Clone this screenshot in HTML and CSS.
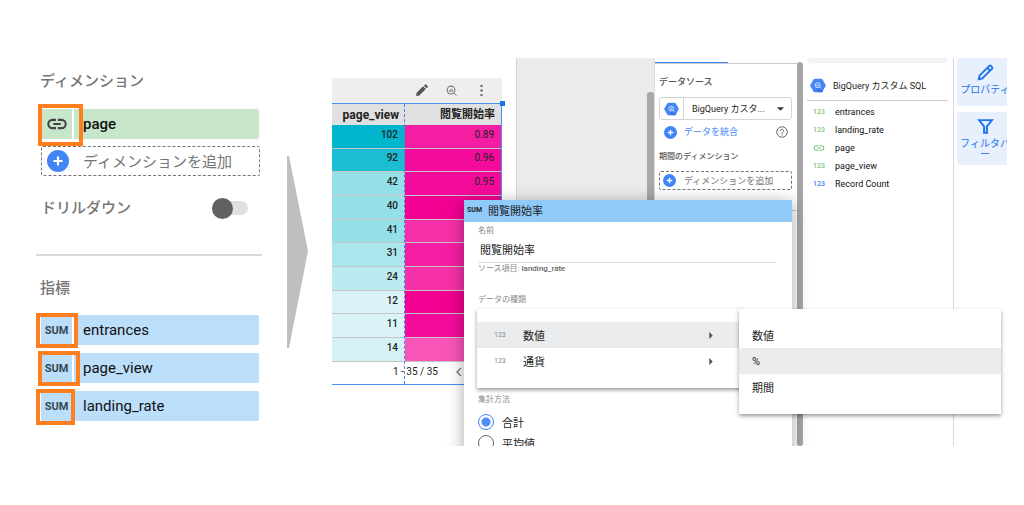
FILE: index.html
```html
<!DOCTYPE html>
<html lang="ja">
<head>
<meta charset="utf-8">
<title>閲覧開始率</title>
<link rel="stylesheet" href="styles.css">
</head>
<body>
<svg class="defs" aria-hidden="true">
  <symbol id="plus" viewBox="0 0 24 24"><circle cx="12" cy="12" r="12" fill="#4285f4"/><path d="M12 7v10M7 12h10" stroke="#fff" stroke-width="2.4"/></symbol>
  <symbol id="link" viewBox="0 0 24 24"><path d="M11 7.500H7a4.500 4.500 0 0 0 0 9h4M13 7.500h4a4.500 4.500 0 0 1 0 9h-4M8 12h8" fill="none" stroke="currentColor" stroke-width="2.2"/></symbol>
  <symbol id="hex" viewBox="0 0 24 22"><path d="M7 1h10q1 0 1.500 .8l5 8.400q.5.800 0 1.600l-5 8.400q-.5.800-1.500.800H7q-1 0-1.500-.8l-5-8.400q-.5-.8 0-1.600l5-8.400Q6 1 7 1z" fill="#4285f4"/><path d="M14 14l6 5-1.500 2H12l-3-6z" fill="#3b78e7"/><circle cx="11.500" cy="10.500" r="3.800" fill="none" stroke="#d6e4ff" stroke-width="1.500"/><path d="M14.300 13.300l2.200 2.200M10.300 10v2M12.300 9v3" stroke="#d6e4ff" stroke-width="1.500"/></symbol>
</svg>
<main class="page">
  <section class="setup">
    <h2 class="heading">ディメンション</h2>
    <div class="chip chip-green">
      <span class="chip-type"><svg class="link-icon"><use href="#link"/></svg></span>
      <span class="chip-name">page</span>
      <span class="mark mark-page"></span>
    </div>
    <button class="add"><svg class="plus-icon"><use href="#plus"/></svg>ディメンションを追加</button>
    <label class="drill"><span>ドリルダウン</span><input type="checkbox" class="toggle"></label>
    <hr class="rule">
    <h2 class="heading">指標</h2>
    <ul class="metrics">
      <li class="chip chip-blue"><span class="chip-type">SUM</span><span class="chip-name">entrances</span><span class="mark mark-left"></span></li>
      <li class="chip chip-blue"><span class="chip-type">SUM</span><span class="chip-name">page_view</span><span class="mark mark-mid"></span></li>
      <li class="chip chip-blue"><span class="chip-type">SUM</span><span class="chip-name">landing_rate</span><span class="mark mark-narrow"></span></li>
    </ul>
  </section>

  <svg class="arrow" viewBox="0 0 21 192" aria-hidden="true"><path d="M0 0h2l19 95-19 97H0z" fill="#bfbfbf"/></svg>

  <section class="studio">
    <div class="report">
      <div class="tools">
        <svg class="tool" viewBox="0 0 24 24"><path d="M2 22l1-6L15 4l5 5L8 21zM16.500 3l2-2q1-1 2 0l3 3q1 1 0 2l-2 2z" fill="#555"/></svg>
        <svg class="tool tool-small" viewBox="0 0 24 24"><circle cx="11" cy="11" r="8.500" fill="none" stroke="#777" stroke-width="2.400"/><path d="M17 17l6 6M8 11v4M11 8v7M14 10v5" stroke="#777" stroke-width="2"/></svg>
        <svg class="tool" viewBox="0 0 24 24"><g fill="#666"><circle cx="12" cy="3.500" r="2.200"/><circle cx="12" cy="12" r="2.200"/><circle cx="12" cy="20.500" r="2.200"/></g></svg>
      </div>
      <div class="chart">
        <table class="grid">
          <thead><tr><th class="col-page">page_view</th><th>閲覧開始率</th></tr></thead>
          <tbody>
            <tr><td class="c1">102</td><td class="p3">0.89</td></tr>
            <tr><td class="c2">92</td><td class="p2">0.96</td></tr>
            <tr><td class="c3">42</td><td class="p2">0.95</td></tr>
            <tr><td class="c3">40</td><td class="p1"></td></tr>
            <tr><td class="c3">41</td><td class="p4"></td></tr>
            <tr><td class="c4">31</td><td class="p3"></td></tr>
            <tr><td class="c5">24</td><td class="p4"></td></tr>
            <tr><td class="c7">12</td><td class="p1"></td></tr>
            <tr><td class="c7">11</td><td class="p2"></td></tr>
            <tr><td class="c6">14</td><td class="p5"></td></tr>
          </tbody>
        </table>
        <div class="pager"><span>1 - 35 / 35</span><svg class="prev" viewBox="0 0 6 10"><path d="M5 1L1 5l4 4" fill="none" stroke="#777" stroke-width="1.300"/></svg></div>
        <span class="column-line"></span>
        <span class="handle"></span>
      </div>
    </div>
    <div class="canvas"><span class="canvas-thumb"></span></div>

    <div class="data">
      <div class="tab-line"><span class="tab-active"></span></div>
      <label class="data-title" for="source">データソース</label>
      <div class="source">
        <span class="source-icon"><svg class="hex"><use href="#hex"/></svg></span>
        <select id="source" class="source-select"><option>BigQuery カスタ...</option></select>
        <svg class="caret" viewBox="0 0 8 4"><path d="M0 0h8L4 4z" fill="#333"/></svg>
      </div>
      <div class="blend">
        <button class="blend-button"><svg class="plus-small"><use href="#plus"/></svg>データを統合</button>
        <svg class="help" viewBox="0 0 24 24"><circle cx="12" cy="12" r="10.500" fill="none" stroke="#666" stroke-width="2"/><path d="M8.500 10a3.500 3.500 0 1 1 5.500 2.700c-1.200.9-2 1.300-2 2.800M12 17v2.200" fill="none" stroke="#666" stroke-width="2"/></svg>
      </div>
      <h3 class="range-title">期間のディメンション</h3>
      <button class="add add-small"><svg class="plus-small"><use href="#plus"/></svg>ディメンションを追加</button>
      <hr class="data-rule">
    </div>
    <div class="scroll"></div>

    <div class="fields">
      <div class="search"></div>
      <div class="fields-title"><svg class="hex"><use href="#hex"/></svg>BigQuery カスタム SQL</div>
      <ul class="field-list">
        <li><span class="kind">123</span>entrances</li>
        <li><span class="kind">123</span>landing_rate</li>
        <li><span class="kind"><svg class="kind-link"><use href="#link"/></svg></span>page</li>
        <li><span class="kind">123</span>page_view</li>
        <li><span class="kind kind-blue">123</span>Record Count</li>
      </ul>
    </div>
    <nav class="rail">
      <button class="rail-button rail-first"><svg class="rail-icon" viewBox="0 0 24 24"><path d="M2.500 21.500l1-5L17 3q1.500-1.500 3 0l1 1q1.500 1.500 0 3L7.500 20.500zM14.500 5.500l4 4" fill="none" stroke="#1a73e8" stroke-width="2.600"/></svg>プロパティ</button>
      <button class="rail-button"><svg class="rail-icon" viewBox="0 0 24 24"><path d="M3 3h18l-7 9v9h-4v-9z" fill="none" stroke="#1a73e8" stroke-width="2.800"/></svg>フィルタバー</button>
    </nav>

    <form class="dialog">
      <header class="dialog-head"><span class="sum">SUM</span>閲覧開始率</header>
      <div class="dialog-body">
        <label class="small" for="name">名前</label>
        <input id="name" class="name" type="text" value="閲覧開始率">
        <p class="small origin">ソース項目: <b>landing_rate</b></p>
        <p class="small type-title">データの種類</p>
        <fieldset class="method">
          <legend class="small">集計方法</legend>
          <label class="choice"><input type="radio" name="method" class="radio" checked>合計</label>
          <label class="choice"><input type="radio" name="method" class="radio">平均値</label>
        </fieldset>
      </div>
    </form>
    <div class="menu menu-type">
      <button class="item item-on"><span class="item-kind">123</span>数値<svg class="more" viewBox="0 0 4 8"><path d="M0 0l4 4-4 4z" fill="#555"/></svg></button>
      <button class="item"><span class="item-kind">123</span>通貨<svg class="more" viewBox="0 0 4 8"><path d="M0 0l4 4-4 4z" fill="#555"/></svg></button>
    </div>
    <div class="menu menu-format">
      <button class="item">数値</button>
      <button class="item item-on">%</button>
      <button class="item">期間</button>
    </div>
  </section>
</main>
</body>
</html>
```

FILE: styles.css
```css
* { box-sizing: border-box; }

body {
  margin: 0;
  background: #fff;
  color: #222;
  font-family: Roboto, "Noto Sans CJK JP", sans-serif;
  font-size: 9px;
}

h2, h3, p, ul, fieldset { margin: 0; padding: 0; border: 0; }
ul { list-style: none; }
button, input, select { margin: 0; font: inherit; color: inherit; }
button { padding: 0; border: 0; background: none; text-align: left; cursor: pointer; }
svg { flex: none; }

.defs { position: absolute; width: 0; height: 0; }

.page {
  display: flex;
  align-items: flex-start;
  padding: 58px 17px 58px 36px;
}

/* Dimension and metric setup */
.setup { width: 226px; padding-top: 11px; }
.heading {
  padding-left: 4px;
  font-size: 15px;
  line-height: 24px;
  font-weight: 500;
  color: #757575;
}
.chip {
  position: relative;
  display: flex;
  align-items: center;
  height: 30px;
  margin: 0 3px 0 5px;
  border-radius: 2px;
  font-size: 15px;
}
.chip-green { margin-top: 16px; background: #c8e6c9; }
.chip-blue { background: #bbdefb; }
.chip-type {
  display: flex;
  align-items: center;
  justify-content: center;
  width: 33px;
  height: 100%;
  border-right: 2px solid #fff;
  font-size: 11px;
  font-weight: 700;
  color: #37474f;
}
.chip-name { padding-left: 9px; font-weight: 500; color: #111; }
.chip-blue .chip-name { font-weight: 400; }
.link-icon { width: 22px; height: 22px; color: #444; }
.mark { position: absolute; border: 4px solid #ff7f1f; }
.mark-page { left: -3px; top: -5px; width: 45px; height: 42px; }
.mark-left { left: -5px; top: -2px; width: 42px; height: 35px; }
.mark-mid { left: -3px; top: -2px; width: 42px; height: 35px; }
.mark-narrow { left: -5px; top: -2px; width: 39px; height: 36px; }
.add {
  display: flex;
  align-items: center;
  gap: 14px;
  width: 219px;
  height: 30px;
  margin: 7px 0 0 5px;
  padding: 0 0 1px 5px;
  border: 1px dashed #757575;
  border-radius: 2px;
  font-size: 15px;
  color: #757575;
}
.plus-icon { width: 22px; height: 22px; }
.drill {
  display: flex;
  align-items: center;
  justify-content: space-between;
  margin-top: 20px;
  padding: 0 14px 0 5px;
  font-size: 15px;
  line-height: 24px;
  font-weight: 500;
  color: #757575;
}
.toggle {
  appearance: none;
  display: flex;
  align-items: center;
  width: 36px;
  height: 14px;
  border-radius: 7px;
  background: #e0e0e0;
}
.toggle::before {
  content: "";
  width: 21px;
  height: 21px;
  flex: none;
  border-radius: 50%;
  background: #616161;
}
.rule { margin: 34px 0 20px; border: 0; border-top: 2px solid #d9d9d9; }
.metrics { display: flex; flex-direction: column; gap: 8px; margin-top: 15px; }

.arrow { width: 21px; height: 192px; margin: 98px 24px 0 25px; }

/* Report editor */
.studio {
  position: relative;
  display: flex;
  flex: 1;
  min-width: 0;
  height: 388px;
  overflow: hidden;
}
.report { width: 184px; padding: 20px 14px 0 0; }
.tools {
  display: flex;
  align-items: center;
  justify-content: flex-end;
  gap: 18px;
  height: 25px;
  padding-right: 14px;
  background: #eee;
}
.tool { width: 13px; height: 13px; }
.tool-small { width: 11px; height: 11px; }
.chart {
  position: relative;
  border: 1px solid #4a90f0;
  border-left: 0;
}
.grid {
  width: 100%;
  height: 258px;
  border-collapse: collapse;
  table-layout: fixed;
  font-size: 10px;
  line-height: 14px;
}
.grid th {
  height: 21px;
  padding: 0 6px 0 0;
  background: #e0e0e0;
  font-size: 12px;
  font-weight: 700;
  text-align: right;
  white-space: nowrap;
  color: #222;
}
.grid th + th { font-size: 11px; }
.grid .col-page { width: 73px; }
.grid td {
  padding: 0 7px 3px 0;
  border-bottom: 1px solid #c6c6c6;
  text-align: right;
}
.grid td:first-child { font-weight: 500; }
.c1 { background: #00b5cc; }
.c2 { background: #1cbdd1; }
.c3 { background: #93e0e8; }
.c4 { background: #aae6ed; }
.c5 { background: #bbebf0; }
.c6 { background: #d4f2f5; }
.c7 { background: #daf3f7; }
.p1 { background: #f20091; }
.p2 { background: #f50b9b; }
.p3 { background: #f51ea2; }
.p4 { background: #f530a8; }
.p5 { background: #f855b8; }
.pager {
  display: flex;
  align-items: center;
  gap: 18px;
  height: 22px;
  padding: 0 0 3px 61px;
  font-size: 10px;
  white-space: nowrap;
}
.prev { width: 6px; height: 10px; }
.column-line { position: absolute; left: 72px; top: 0; bottom: 0; border-left: 1px dashed #4a7fe8; }
.handle { position: absolute; right: -4px; top: -3px; width: 5px; height: 5px; background: #1a73e8; }

.canvas {
  display: flex;
  align-items: flex-end;
  justify-content: flex-end;
  flex: 1;
  border-left: 1px solid #d5d5d5;
  background: #ebebeb;
}
.canvas-thumb { width: 7px; height: 354px; border-radius: 3px 3px 0 0; background: #a8a8a8; }

.data { width: 143px; padding: 4px 5px 0 4px; border-left: 1px solid #ddd; }
.tab-line { margin: 0 -5px 0 -4px; border-bottom: 1px solid #ccc; }
.tab-active { display: block; width: 73px; height: 1px; background: #4285f4; }
.data-title { display: block; margin-top: 11px; line-height: 14px; font-weight: 500; color: #555; }
.source {
  display: flex;
  align-items: center;
  height: 23px;
  margin-top: 8px;
  padding-right: 7px;
  border: 1px solid #d5d5d5;
  border-radius: 3px;
}
.source-icon {
  display: flex;
  align-items: center;
  justify-content: center;
  width: 24px;
  height: 100%;
  border-right: 1px solid #d5d5d5;
}
.hex { width: 16px; height: 15px; }
.source-icon .hex { width: 15px; height: 14px; }
.source-select { appearance: none; flex: 1; min-width: 0; padding: 0 0 0 8px; border: 0; background: none; white-space: nowrap; }
.caret { width: 7px; height: 4px; }
.blend { display: flex; align-items: center; justify-content: space-between; margin-top: 5px; padding: 0 4px 0 5px; }
.blend-button { display: flex; align-items: center; gap: 7px; line-height: 14px; color: #4285f4; }
.plus-small { width: 13px; height: 13px; }
.help { width: 12px; height: 12px; }
.range-title { margin-top: 12px; font-size: 8px; line-height: 12px; font-weight: 500; color: #555; }
.add-small { gap: 8px; width: 100%; height: 19px; margin: 8px 0 0; padding-left: 3px; font-size: 9px; }
.data-rule { margin: 20px -5px 0 0; border: 0; border-top: 1px solid #ccc; }

.scroll { width: 6px; margin-top: 4px; border-radius: 3px; background: #a6a6a6; }

.fields { width: 151px; padding: 0 5px 0 4px; border-right: 1px solid #d8d8dc; }
.search { height: 5px; border-radius: 0 0 5px 5px; background: #f1f3f4; }
.fields-title {
  display: flex;
  align-items: center;
  gap: 7px;
  height: 38px;
  padding: 7px 0 0 3px;
  border-bottom: 1px solid #ccc;
}
.field-list { padding-top: 2px; color: #111; }
.field-list li { display: flex; align-items: center; height: 18px; padding-left: 6px; }
.kind { display: flex; width: 22px; font-size: 7px; font-weight: 500; color: #81c784; }
.kind-blue { color: #4285f4; }
.kind-link { width: 12px; height: 12px; }

.rail { display: flex; flex-direction: column; gap: 6px; width: 53px; padding-left: 3px; }
.rail-button {
  display: flex;
  flex-direction: column;
  align-items: center;
  gap: 3px;
  width: 56px;
  padding: 6px 2px 0;
  height: 53px;
  border-radius: 3px;
  background: #e8f0fe;
  font-size: 10px;
  line-height: 11px;
  text-align: center;
  word-break: break-all;
  line-break: anywhere;
  color: #1a73e8;
}
.rail-first { height: 48px; }
.rail-icon { width: 17px; height: 17px; }

/* Metric editor floating over the report */
.dialog {
  position: absolute;
  top: 142px;
  right: 215px;
  width: 328px;
  height: 260px;
  background: #fff;
  box-shadow: 0 3px 16px rgba(0, 0, 0, .35);
}
.dialog-head {
  display: flex;
  align-items: center;
  gap: 6px;
  height: 22px;
  padding: 0 0 3px 3px;
  background: #90caf9;
  font-size: 11px;
}
.sum { font-size: 7px; font-weight: 700; }
.dialog-body { padding: 3px 16px 0 14px; }
.small { display: block; font-size: 8px; line-height: 12px; color: #888; }
.small b { font-weight: 500; color: #666; }
.name { display: block; width: 100%; height: 26px; padding: 0 2px 2px; border: 0; border-bottom: 1px solid #ddd; font-size: 11px; }
.type-title { margin-top: 19px; }
.method { margin-top: 88px; }
.method legend { padding: 0; }
.choice { display: flex; align-items: center; gap: 8px; height: 21px; font-size: 11px; }
.method legend + .choice { margin-top: 5px; }
.radio { appearance: none; width: 16px; height: 16px; border: 1px solid #666; border-radius: 50%; }
.radio:checked { border-color: #4285f4; background: radial-gradient(circle, #4d8ff8 4px, #fff 5px); }

.menu {
  position: absolute;
  top: 251px;
  padding: 13px 0 14px;
  background: #fff;
  box-shadow: 0 2px 4px rgba(0, 0, 0, .4);
}
.menu-type { right: 262px; width: 268px; }
.menu-format { right: 6px; width: 262px; }
.item { display: flex; align-items: center; width: 100%; height: 26px; padding-left: 13px; font-size: 11px; color: #222; }
.menu-type .item { padding: 0 32px 0 17px; }
.item-on { background: #ebecee; }
.item-kind { width: 29px; font-size: 7px; color: #888; }
.more { width: 4px; height: 7px; margin-left: auto; }
```
